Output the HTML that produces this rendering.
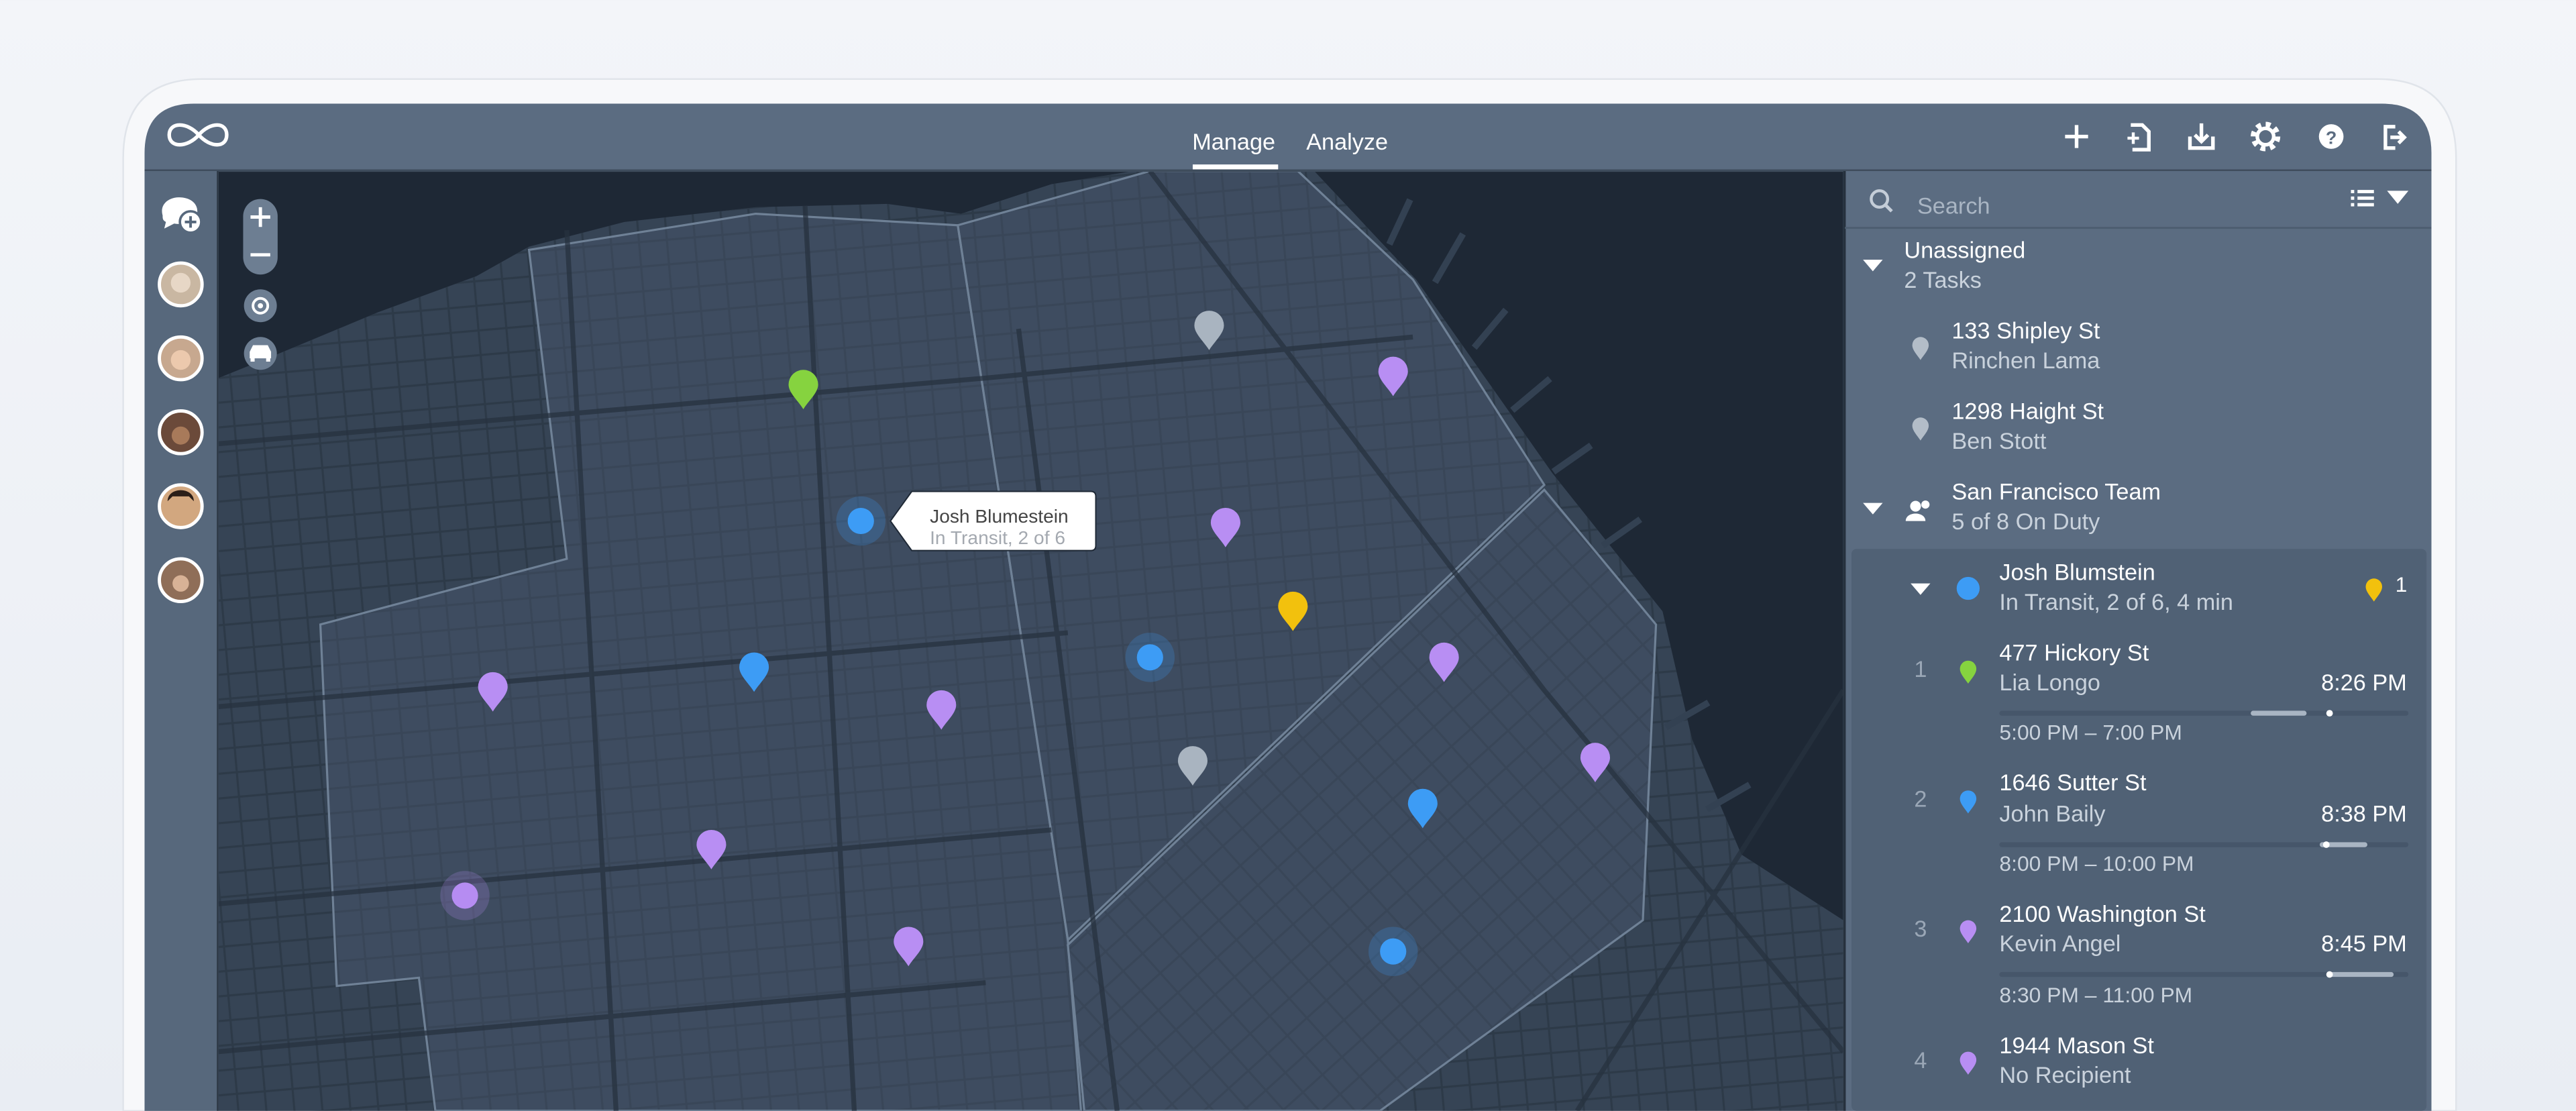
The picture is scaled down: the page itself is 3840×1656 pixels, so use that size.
<!DOCTYPE html>
<html><head><meta charset="utf-8">
<style>
html,body{margin:0;padding:0;width:3840px;height:1656px;overflow:hidden;background:#eef1f6;}
svg{display:block;font-family:"Liberation Sans",sans-serif;overflow:hidden;}
</style></head>
<body>
<svg width="3840" height="1656" viewBox="0 0 1568 676" xmlns="http://www.w3.org/2000/svg">
<defs>
<linearGradient id="bg" x1="0" y1="0" x2="0" y2="1"><stop offset="0" stop-color="#f3f5f9"/><stop offset="1" stop-color="#e9edf3"/></linearGradient>
<pattern id="grid" width="17" height="15" patternUnits="userSpaceOnUse" patternTransform="rotate(-5)">
<path d="M0 0.6H17M0.6 0V15" stroke="#2a3644" stroke-width="1.4" fill="none"/></pattern>
<pattern id="grid2" width="16" height="16" patternUnits="userSpaceOnUse" patternTransform="rotate(-42)">
<path d="M0 0.6H16M0.6 0V16" stroke="#2a3644" stroke-width="1.4" fill="none"/></pattern>
<clipPath id="mapclip"><rect x="133" y="104" width="989" height="572"/></clipPath>
<path id="pin" d="M0,13 C-3,8 -9,3 -9,-2 A9,9 0 1 1 9,-2 C9,3 3,8 0,13Z"/>
<path id="spin" d="M0,8 C-2,5 -5,2 -5,-1 A5,5 0 1 1 5,-1 C5,2 2,5 0,8Z"/>
</defs>
<rect width="1568" height="676" fill="url(#bg)"/>
<!-- device frame -->
<path d="M75,676 V96 Q75,48 123,48 H1447 Q1495,48 1495,96 V676Z" fill="#f7f8fa" stroke="#e0e4ea" stroke-width="1"/>
<path d="M88,676 V93 Q88,63 118,63 H1450 Q1480,63 1480,93 V676Z" fill="#5b6c81"/>
<!-- map -->
<g clip-path="url(#mapclip)">
<rect x="133" y="104" width="989" height="572" fill="#1e2835"/>
<path d="M133,230 L170,215 L230,190 L290,168 L322,150 L380,135 L460,126 L540,124 L585,130 L640,112 L690,104 L800,104 L862,170 L945,288 L1012,372 L1030,450 L1060,520 L1122,560 L1122,676 L133,676Z" fill="#364455"/>
<path d="M133,230 L170,215 L230,190 L290,168 L322,150 L380,135 L460,126 L540,124 L585,130 L640,112 L690,104 L800,104 L862,170 L945,288 L1012,372 L1030,450 L1060,520 L1122,560 L1122,676 L133,676Z" fill="url(#grid)" opacity="0.75"/>
<!-- piers -->
<g fill="#334152"><rect x="850" y="120" width="4" height="30" transform="rotate(25 852 135)"/><rect x="880" y="140" width="4" height="34" transform="rotate(30 882 157)"/><rect x="905" y="185" width="4" height="30" transform="rotate(40 907 200)"/><rect x="930" y="225" width="4" height="30" transform="rotate(50 932 240)"/><rect x="955" y="265" width="4" height="28" transform="rotate(55 957 279)"/><rect x="985" y="310" width="4" height="28" transform="rotate(55 987 324)"/><rect x="1025" y="420" width="4" height="30" transform="rotate(60 1027 435)"/><rect x="1050" y="470" width="4" height="30" transform="rotate(60 1052 485)"/></g>
<!-- zones -->
<path d="M322,152 L460,130 L583,137 L650,572 L658,676 L265,676 L255,595 L205,600 L195,380 L345,340Z" fill="#4a5a70" fill-opacity="0.4" stroke="#6f8196" stroke-width="1.3"/>
<path d="M583,137 L700,104 L790,104 L860,170 L940,295 L650,572Z" fill="#4a5a70" fill-opacity="0.4" stroke="#6f8196" stroke-width="1.3"/>
<path d="M650,575 L940,298 L1008,380 L1000,560 L840,676 L660,676Z" fill="#364455"/>
<path d="M650,575 L940,298 L1008,380 L1000,560 L840,676 L660,676Z" fill="url(#grid2)" opacity="0.75"/>
<path d="M650,575 L940,298 L1008,380 L1000,560 L840,676 L660,676Z" fill="#4a5a70" fill-opacity="0.4" stroke="#6f8196" stroke-width="1.3"/>
<!-- major roads -->
<g stroke="#27323f" stroke-width="3" fill="none" opacity="0.75">
<path d="M133,270 L600,230 L860,205"/><path d="M133,430 L650,385"/><path d="M133,550 L640,505"/><path d="M133,640 L600,598"/>
<path d="M345,140 L375,676"/><path d="M490,125 L520,676"/><path d="M620,200 L680,676"/>
<path d="M700,104 L940,420 L1122,640"/><path d="M1122,420 L960,676"/>
</g>
</g>
<!-- top bar -->
<rect x="88" y="103" width="1392" height="1.5" fill="#3e4c5c"/>
<path d="M121,82 C114,74 103,74 103,82 C103,90 114,90 121,82 C128,74 138,74 138,82 C138,90 128,90 121,82Z" fill="none" stroke="#fff" stroke-width="2.2"/>
<text x="751" y="91" font-size="14" fill="#fff" text-anchor="middle">Manage</text>
<rect x="726" y="100" width="52" height="3" fill="#fff"/>
<text x="820" y="91" font-size="14" fill="#fff" text-anchor="middle">Analyze</text>
<g stroke="#fff" fill="none" stroke-width="2.2">
<path d="M1264,76V90M1257,83H1271"/>
<path d="M1297,76H1304L1308,80V91H1298"/><path d="M1295,84H1302M1298.5,80.5V87.5" stroke-width="1.8"/>
<path d="M1333,83V90H1347V83"/><path d="M1340,75V86M1336,82L1340,86L1344,82"/>
<circle cx="1379" cy="83" r="5"/><circle cx="1379" cy="83" r="7.5" stroke-dasharray="3 2.9" stroke-width="3"/>
<path d="M1458,77H1452V90H1458"/><path d="M1455,83.5H1463M1460,80L1463.5,83.5L1460,87"/>
</g>
<circle cx="1419" cy="83" r="7.5" fill="#fff"/>
<text x="1419" y="87.5" font-size="11" font-weight="bold" fill="#5b6c81" text-anchor="middle">?</text>
<!-- sidebar -->
<rect x="88" y="104" width="45" height="572" fill="#57687c"/>
<rect x="132" y="104" width="1" height="572" fill="#2c3744"/>
<path d="M99,131 C97,124 103,120 109,120 C116,120 121,124 120,130 C119,135 112,137 106,136 L100,139 L101,135 C99,134 99,133 99,131Z" fill="#fff"/>
<circle cx="116" cy="135" r="6.5" fill="#fff" stroke="#57687c" stroke-width="1.5"/>
<path d="M116,131.5V138.5M112.5,135H119.5" stroke="#57687c" stroke-width="1.6"/>
<g stroke="#fff" stroke-width="2">
<circle cx="110" cy="173" r="13" fill="#c9b7a2"/><circle cx="110" cy="218" r="13" fill="#c7a88f"/><circle cx="110" cy="263" r="13" fill="#6b4a3a"/><circle cx="110" cy="308" r="13" fill="#d2a77f"/><circle cx="110" cy="353" r="13" fill="#8f6e58"/>
</g>
<g fill="#e7d7c6"><circle cx="110" cy="172" r="6"/></g>
<g fill="#ecc9ad"><circle cx="110" cy="219" r="6"/></g>
<g fill="#a87a5a"><circle cx="110" cy="265" r="5.5"/></g>
<g fill="#2a1e18"><path d="M102,305 C102,296 118,296 118,305 L115,302 L105,302Z"/></g>
<g fill="#d8b296"><circle cx="110" cy="355" r="5"/></g>
<!-- map controls -->
<rect x="148" y="121" width="21" height="46" rx="10.5" fill="#6d7e92"/>
<path d="M158.5,126V138M152.5,132H164.5M152.5,155H164.5" stroke="#fff" stroke-width="2"/>
<circle cx="158.5" cy="186" r="10" fill="#6d7e92"/>
<circle cx="158.5" cy="186" r="4.5" fill="none" stroke="#fff" stroke-width="1.6"/><circle cx="158.5" cy="186" r="1.6" fill="#fff"/>
<circle cx="158.5" cy="215" r="10" fill="#6d7e92"/>
<path d="M152,218 V214 L154,210 H163 L165,214 V218Z" fill="#fff"/><rect x="152.5" y="217" width="2.5" height="3" fill="#fff"/><rect x="162" y="217" width="2.5" height="3" fill="#fff"/>
<!-- halos and dots -->
<g>
<circle cx="524" cy="317" r="15" fill="#3d9cf5" opacity="0.22"/><circle cx="524" cy="317" r="8" fill="#3d9cf5"/>
<circle cx="700" cy="400" r="15" fill="#3d9cf5" opacity="0.22"/><circle cx="700" cy="400" r="8" fill="#3d9cf5"/>
<circle cx="848" cy="579" r="15" fill="#3d9cf5" opacity="0.22"/><circle cx="848" cy="579" r="8" fill="#3d9cf5"/>
<circle cx="283" cy="545" r="15" fill="#b68cf2" opacity="0.22"/><circle cx="283" cy="545" r="8" fill="#b68cf2"/>
</g>
<g>
<use href="#pin" x="736" y="200" fill="#a9b4c0"/>
<use href="#pin" x="848" y="228" fill="#b88ef3"/>
<use href="#pin" x="489" y="236" fill="#86d33f"/>
<use href="#pin" x="746" y="320" fill="#b88ef3"/>
<use href="#pin" x="787" y="371" fill="#f2c10d"/>
<use href="#pin" x="879" y="402" fill="#b88ef3"/>
<use href="#pin" x="459" y="408" fill="#3d9cf5"/>
<use href="#pin" x="300" y="420" fill="#b88ef3"/>
<use href="#pin" x="573" y="431" fill="#b88ef3"/>
<use href="#pin" x="726" y="465" fill="#a9b4c0"/>
<use href="#pin" x="971" y="463" fill="#b88ef3"/>
<use href="#pin" x="866" y="491" fill="#3d9cf5"/>
<use href="#pin" x="433" y="516" fill="#b88ef3"/>
<use href="#pin" x="553" y="575" fill="#b88ef3"/>
</g>
<!-- tooltip -->
<path d="M555,299 H664 Q667,299 667,302 V332 Q667,335 664,335 H555 L542,317Z" fill="#fff" stroke="#1e2835" stroke-width="0.8"/>
<text x="566" y="318" font-size="11.5" fill="#444">Josh Blumestein</text>
<text x="566" y="331" font-size="11.5" fill="#a4a9b0">In Transit, 2 of 6</text>
<!-- right panel -->
<rect x="1122" y="104" width="358" height="572" fill="#5b6c81"/>
<rect x="1122" y="104" width="1.5" height="572" fill="#26313d"/>
<rect x="1123" y="138" width="357" height="1.2" fill="#4d5d70"/>
<circle cx="1144" cy="121" r="5" fill="none" stroke="#c4cdd8" stroke-width="1.8"/><path d="M1147.5,124.5L1151.5,128.5" stroke="#c4cdd8" stroke-width="2"/>
<text x="1167" y="130" font-size="14" fill="#a9b5c3">Search</text>
<rect x="1127" y="334" width="350" height="342" rx="3" fill="#506175"/>
<g fill="#fff"><rect x="1431" y="115.5" width="2" height="2"/><rect x="1431" y="119.5" width="2" height="2"/><rect x="1431" y="123.5" width="2" height="2"/><rect x="1435" y="115.5" width="10" height="2"/><rect x="1435" y="119.5" width="10" height="2"/><rect x="1435" y="123.5" width="10" height="2"/>
<path d="M1453,116H1466L1459.5,124Z"/>
<path d="M1134,158H1146L1140,165Z"/>
<path d="M1134,306H1146L1140,313Z"/>
<path d="M1163,355H1175L1169,362Z"/>
</g>
<g font-size="14">
<text x="1159" y="157" fill="#fff">Unassigned</text>
<text x="1159" y="175" fill="#c9d2dc">2 Tasks</text>
<use href="#spin" x="1169" y="211" fill="#b3bdc8"/>
<text x="1188" y="206" fill="#fff">133 Shipley St</text>
<text x="1188" y="224" fill="#c9d2dc">Rinchen Lama</text>
<use href="#spin" x="1169" y="260" fill="#b3bdc8"/>
<text x="1188" y="255" fill="#fff">1298 Haight St</text>
<text x="1188" y="273" fill="#c9d2dc">Ben Stott</text>
<circle cx="1166" cy="308" r="3.3" fill="#fff"/><path d="M1160,317 C1160,311 1172,311 1172,317Z" fill="#fff"/>
<circle cx="1172" cy="307" r="2.5" fill="#fff"/>
<text x="1188" y="304" fill="#fff">San Francisco Team</text>
<text x="1188" y="322" fill="#c9d2dc">5 of 8 On Duty</text>
<circle cx="1198" cy="358" r="7" fill="#3d9cf5"/>
<text x="1217" y="353" fill="#fff">Josh Blumstein</text>
<text x="1217" y="371" fill="#c9d2dc">In Transit, 2 of 6, 4 min</text>
<use href="#spin" x="1445" y="358" fill="#f2c10d"/>
<text x="1458" y="360" font-size="13" fill="#fff">1</text>
<!-- stop 1 -->
<text x="1169" y="412" fill="#9aa7b6" text-anchor="middle">1</text>
<use href="#spin" x="1198" y="408" fill="#86d33f"/>
<text x="1217" y="402" fill="#fff">477 Hickory St</text>
<text x="1217" y="420" fill="#c9d2dc">Lia Longo</text>
<text x="1465" y="420" fill="#fff" text-anchor="end">8:26 PM</text>
<rect x="1217" y="432.5" width="249" height="3" rx="1.5" fill="#46566a"/>
<rect x="1370" y="432.5" width="34" height="3" rx="1.5" fill="#a9b5c3"/>
<circle cx="1418" cy="434" r="2" fill="#fff"/>
<text x="1217" y="450" fill="#c9d2dc" font-size="13">5:00 PM – 7:00 PM</text>
<!-- stop 2 -->
<text x="1169" y="491" fill="#9aa7b6" text-anchor="middle">2</text>
<use href="#spin" x="1198" y="487" fill="#3d9cf5"/>
<text x="1217" y="481" fill="#fff">1646 Sutter St</text>
<text x="1217" y="500" fill="#c9d2dc">John Baily</text>
<text x="1465" y="500" fill="#fff" text-anchor="end">8:38 PM</text>
<rect x="1217" y="512.5" width="249" height="3" rx="1.5" fill="#46566a"/>
<rect x="1412" y="512.5" width="29" height="3" rx="1.5" fill="#a9b5c3"/>
<circle cx="1416" cy="514" r="2" fill="#fff"/>
<text x="1217" y="530" fill="#c9d2dc" font-size="13">8:00 PM – 10:00 PM</text>
<!-- stop 3 -->
<text x="1169" y="570" fill="#9aa7b6" text-anchor="middle">3</text>
<use href="#spin" x="1198" y="566" fill="#b88ef3"/>
<text x="1217" y="561" fill="#fff">2100 Washington St</text>
<text x="1217" y="579" fill="#c9d2dc">Kevin Angel</text>
<text x="1465" y="579" fill="#fff" text-anchor="end">8:45 PM</text>
<rect x="1217" y="591.5" width="249" height="3" rx="1.5" fill="#46566a"/>
<rect x="1418" y="591.5" width="39" height="3" rx="1.5" fill="#a9b5c3"/>
<circle cx="1418" cy="593" r="2" fill="#fff"/>
<text x="1217" y="610" fill="#c9d2dc" font-size="13">8:30 PM – 11:00 PM</text>
<!-- stop 4 -->
<text x="1169" y="650" fill="#9aa7b6" text-anchor="middle">4</text>
<use href="#spin" x="1198" y="646" fill="#b88ef3"/>
<text x="1217" y="641" fill="#fff">1944 Mason St</text>
<text x="1217" y="659" fill="#c9d2dc">No Recipient</text>
</g>
</svg>
</body></html>
